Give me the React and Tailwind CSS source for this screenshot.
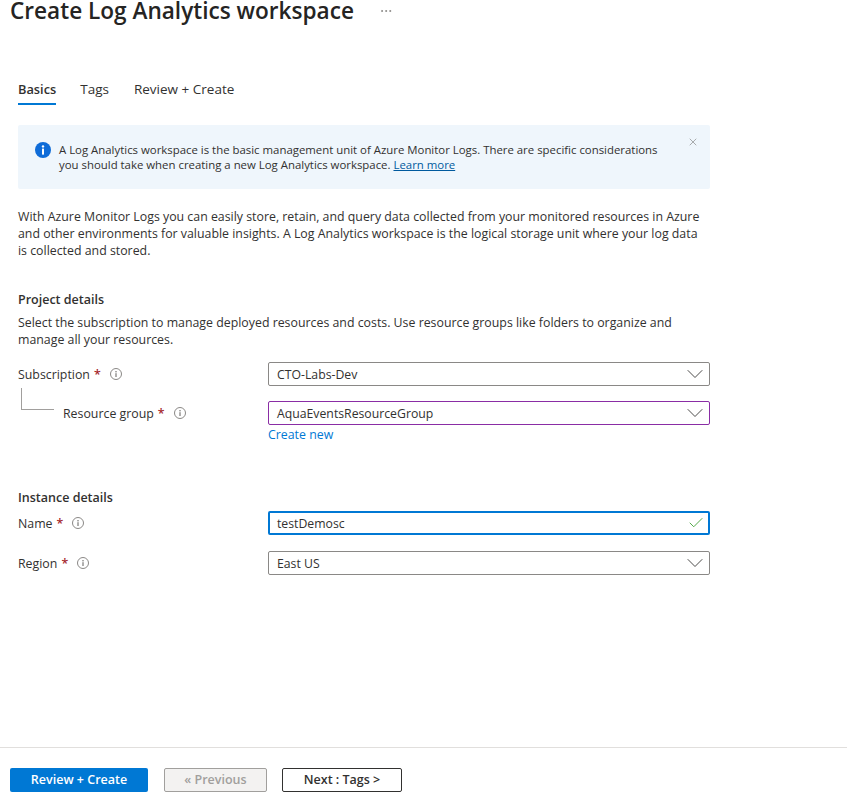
import { ChevronDown, Check, X, MoreHorizontal } from 'lucide-react';

const FONT = "font-['Open_Sans','Noto_Sans',sans-serif]";

function InfoDot() {
  return (
    <svg width="12" height="12" viewBox="0 0 12 12" className="shrink-0" fill="none">
      <circle cx="6" cy="6" r="5.5" stroke="#8a8886" />
      <circle cx="6" cy="3.7" r="0.7" fill="#605e5c" />
      <path d="M6 5.2V9" stroke="#605e5c" strokeWidth="1" />
    </svg>
  );
}

function Label({ text }) {
  return (
    <span className="flex items-center whitespace-nowrap text-[#323130]">
      {text}
      <span className="ml-[4px] font-semibold text-[#a4262c]">*</span>
      <span className="ml-[9px]"><InfoDot /></span>
    </span>
  );
}

function Field({ value, border = 'border border-[#8a8886] pl-[8px]', check = false }) {
  return (
    <div className={`flex h-[24px] w-[442px] items-center justify-between rounded-[2px] bg-white text-[12.25px] text-[#323130] ${border}`}>
      <span>{value}</span>
      {check ? (
        <Check size={18} strokeWidth={1.3} className="mr-[3px] text-[#4fa845]" />
      ) : (
        <ChevronDown size={28} strokeWidth={0.75} className="text-[#323130]" />
      )}
    </div>
  );
}

export default function App() {
  return (
    <div className={`${FONT} flex h-[803px] flex-col overflow-hidden bg-white text-[12.35px] leading-[17px] text-[#323130]`}>
      <div className="flex-1 pl-[18px]">
        {/* Title */}
        <div className="-ml-[8px] -mt-[5px] flex h-[32px] items-center">
          <h1 className="text-[22.6px] font-semibold leading-[32px] text-[#252423]">Create Log Analytics workspace</h1>
          <MoreHorizontal size={14} strokeWidth={1} className="ml-[25px] text-[#605e5c]" />
        </div>

        {/* Tabs */}
        <div className="mt-[51px] flex text-[13.5px]">
          <div className="h-[27px] border-b-2 border-[#0078d4] text-[12.8px] font-semibold leading-[22px]">Basics</div>
          <div className="ml-[24px] leading-[22px]">Tags</div>
          <div className="ml-[25px] leading-[22px]">Review + Create</div>
        </div>

        {/* Banner */}
        <div className="mt-[20px] flex h-[64px] w-[692px] rounded-[2px] bg-[#eff6fc] pl-[17px] pt-[17px] text-[11.4px]">
          <svg width="16" height="16" viewBox="0 0 16 16" className="shrink-0">
            <circle cx="8" cy="8" r="8" fill="#0f6cd8" />
            <circle cx="8" cy="4.4" r="1.2" fill="#fff" />
            <rect x="7" y="6.6" width="2" height="6" fill="#fff" />
          </svg>
          <p className="ml-[8px] w-[604px] leading-[15px]">
            A Log Analytics workspace is the basic management unit of Azure Monitor Logs. There are specific considerations
            you should take when creating a new Log Analytics workspace. <span className="text-[#005a9e] underline">Learn more</span>
          </p>
          <X size={12} strokeWidth={1} className="-mt-[6px] ml-[24px] shrink-0 text-[#605e5c]" />
        </div>

        {/* Intro */}
        <p className="mt-[19px] w-[685px]">
          With Azure Monitor Logs you can easily store, retain, and query data collected from your monitored resources in Azure
          and other environments for valuable insights. A Log Analytics workspace is the logical storage unit where your log data
          is collected and stored.
        </p>

        {/* Project details */}
        <h2 className="mt-[32px] text-[12.5px] font-semibold">Project details</h2>
        <p className="mt-[6px] w-[692px]">
          Select the subscription to manage deployed resources and costs. Use resource groups like folders to organize and
          manage all your resources.
        </p>

        <div className="mt-[14px] flex items-center">
          <div className="w-[250px]"><Label text="Subscription" /></div>
          <Field value="CTO-Labs-Dev" />
        </div>
        <div className="mt-[15px] flex items-start">
          <div className="flex w-[250px] items-start">
            <div className="-mt-[13px] ml-[3px] h-[22px] w-[33px] shrink-0 border-b border-l border-[#a19f9d]" />
            <div className="ml-[9px] flex h-[24px] items-center"><Label text="Resource group" /></div>
          </div>
          <div>
            <Field value="AquaEventsResourceGroup" border="border border-[#8a2da5] pl-[8px]" />
            <div className="mt-[1px] text-[#0078d4]">Create new</div>
          </div>
        </div>

        {/* Instance details */}
        <h2 className="mt-[46px] text-[12.5px] font-semibold">Instance details</h2>
        <div className="mt-[5px] flex items-center">
          <div className="w-[250px]"><Label text="Name" /></div>
          <Field value="testDemosc" border="border-2 border-[#0078d4] pl-[7px]" check />
        </div>
        <div className="mt-[16px] flex items-center">
          <div className="w-[250px]"><Label text="Region" /></div>
          <Field value="East US" />
        </div>
      </div>

      {/* Footer */}
      <div className="flex h-[56px] items-start border-t border-[#e1dfdd] pl-[10px] pt-[20px] text-[12.5px] font-semibold">
        <button className="h-[24px] w-[138px] rounded-[2px] bg-[#0078d4] pb-[2px] text-white">Review + Create</button>
        <button className="ml-[16px] h-[24px] w-[103px] rounded-[2px] border border-[#a19f9d] bg-[#f3f2f1] pb-[2px] text-[#a19f9d]">« Previous</button>
        <button className="ml-[15px] h-[24px] w-[120px] rounded-[2px] border border-[#323130] bg-white pb-[2px] text-[#323130]">Next : Tags &gt;</button>
      </div>
    </div>
  );
}
